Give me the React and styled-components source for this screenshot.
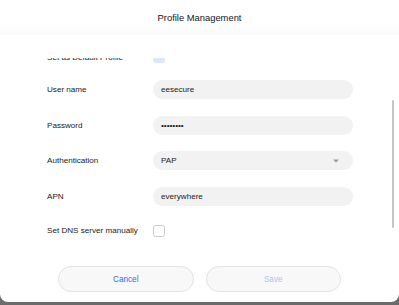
import React, { useLayoutEffect, useRef } from "react";
import styled, { createGlobalStyle } from "styled-components";

const Global = createGlobalStyle`
  html, body { margin: 0; padding: 0; }
  body {
    background: #6b6b6b;
    font-family: "Liberation Sans", Arial, Helvetica, sans-serif;
    width: 399px;
    height: 305px;
    overflow: hidden;
  }
`;

const Dialog = styled.div`
  width: 399px;
  height: 302px;
  background: #ffffff;
  border-radius: 0 0 8px 8px;
  display: flex;
  flex-direction: column;
  overflow: hidden;
`;

const Header = styled.div`
  height: 34px;
  flex: none;
  display: flex;
  align-items: center;
  justify-content: center;
  background: linear-gradient(#ffffff 0%, #ffffff 70%, #fbfbfb 100%);
  box-shadow: 0 1px 1px rgba(0, 0, 0, 0.015);
`;

const Title = styled.h1`
  margin: 0;
  font-size: 9.4px;
  font-weight: 400;
  color: #151515;
`;

const ScrollWrap = styled.div`
  position: relative;
  margin-top: 24px;
  height: 192px;
  flex: none;
`;

const Scroller = styled.div`
  height: 100%;
  overflow-y: auto;
  scrollbar-width: none;
  &::-webkit-scrollbar { display: none; }
`;

const Form = styled.div`
  padding: 0 0 40px 47px;
  display: grid;
  grid-template-columns: 106px 200px;
`;

const Label = styled.div`
  height: ${(p) => p.$h}px;
  display: flex;
  align-items: center;
  font-size: 8.1px;
  color: #1a1a1a;
  white-space: nowrap;
`;

const Cell = styled.div`
  height: ${(p) => p.$h}px;
  display: flex;
  align-items: center;
`;

const TextInput = styled.input`
  box-sizing: border-box;
  width: 200px;
  height: 19px;
  border: none;
  outline: none;
  border-radius: 10px;
  background: #f2f2f2;
  padding: 0 8px;
  font-family: "Liberation Sans", Arial, sans-serif;
  font-size: 8.1px;
  color: #1a1a1a;
`;

const Select = styled.div`
  box-sizing: border-box;
  width: 200px;
  height: 19px;
  border-radius: 10px;
  background: #f2f2f2;
  padding: 0 14px 0 8px;
  display: flex;
  align-items: center;
  justify-content: space-between;
  font-size: 8.1px;
  color: #1a1a1a;
`;

const Check = styled.span`
  box-sizing: border-box;
  width: 12px;
  height: 12px;
  border-radius: 2.5px;
  border: 1px solid ${(p) => (p.$on ? "#dbe8fb" : "#c9c9c9")};
  background: ${(p) => (p.$on ? "#dbe8fb" : "#ffffff")};
`;

const Thumb = styled.div`
  position: absolute;
  right: 5px;
  top: 42px;
  width: 2.5px;
  height: 128px;
  border-radius: 1px;
  background: #c6c6c6;
`;

const Footer = styled.div`
  flex: none;
  padding-top: 16px;
  display: flex;
  justify-content: center;
  gap: 12px;
`;

const Button = styled.button`
  box-sizing: border-box;
  width: 135.5px;
  height: 26px;
  border-radius: 13px;
  border: 1px solid #e3e3e3;
  background: #f8f8f8;
  font-family: "Liberation Sans", Arial, sans-serif;
  font-size: 8.2px;
  color: ${(p) => (p.$disabled ? "#a9c7f5" : "#2f6eea")};
  padding: 0;
`;

const Caret = () => (
  <svg width="6" height="4" viewBox="0 0 6 4">
    <path d="M0 0.5 L6 0.5 L3 3.5 Z" fill="#9a9a9a" />
  </svg>
);

const rows = [
  { label: "Set as Default Profile", h: 30, kind: "check", on: true },
  { label: "User name", h: 35.5, kind: "text", value: "eesecure" },
  { label: "Password", h: 35.5, kind: "password", value: "eesecure" },
  { label: "Authentication", h: 35.5, kind: "select", value: "PAP" },
  { label: "APN", h: 35.5, kind: "text", value: "everywhere" },
  { label: "Set DNS server manually", h: 33, kind: "check", on: false },
];

export default function App() {
  const ref = useRef(null);
  useLayoutEffect(() => {
    if (ref.current) ref.current.scrollTop = 16;
  }, []);

  return (
    <>
      <Global />
      <Dialog>
        <Header>
          <Title>Profile Management</Title>
        </Header>
        <ScrollWrap>
          <Scroller ref={ref}>
            <Form>
              {rows.map((r) => (
                <React.Fragment key={r.label}>
                  <Label $h={r.h}>{r.label}</Label>
                  <Cell $h={r.h}>
                    {r.kind === "check" && <Check $on={r.on} />}
                    {r.kind === "text" && <TextInput readOnly value={r.value} />}
                    {r.kind === "password" && (
                      <TextInput type="password" readOnly value={r.value} />
                    )}
                    {r.kind === "select" && (
                      <Select>
                        <span>{r.value}</span>
                        <Caret />
                      </Select>
                    )}
                  </Cell>
                </React.Fragment>
              ))}
            </Form>
          </Scroller>
          <Thumb />
        </ScrollWrap>
        <Footer>
          <Button>Cancel</Button>
          <Button $disabled>Save</Button>
        </Footer>
      </Dialog>
    </>
  );
}
